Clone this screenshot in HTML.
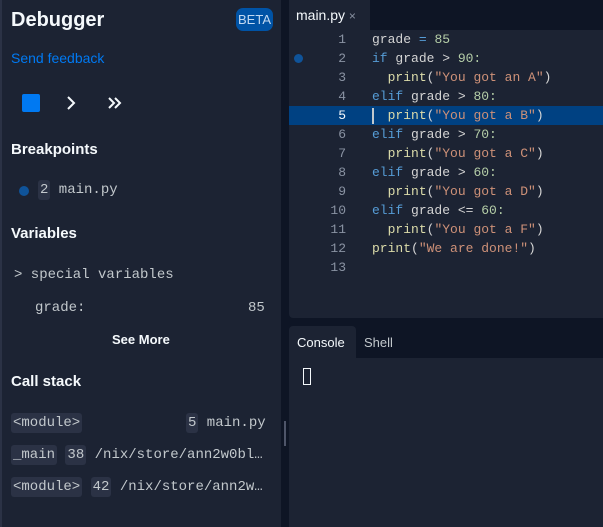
<!DOCTYPE html>
<html><head><meta charset="utf-8"><style>
*{margin:0;padding:0;box-sizing:border-box}
body{width:603px;height:527px;background:#0e1525;position:relative;overflow:hidden;font-family:"Liberation Sans",sans-serif;color:#f5f9fc}
.a{position:absolute}
.mono{font-family:"Liberation Mono",monospace;font-size:13px}
.lm{font-size:14px}
.chip{background:#2b3245;border-radius:3px;padding:2px 2px}
.code div{height:19px;line-height:19px;white-space:pre;position:relative}
.ln{position:absolute;left:0;width:57px;text-align:right;color:#8a93a3}
.k{color:#569cd6}.s{color:#ce9178}.n{color:#b5cea8}.f{color:#dcdcaa}.t{color:#d4d4d4}
</style></head><body>
<div class="a" style="left:0;top:0;width:281px;height:527px;background:#1c2333;border-left:2px solid #2b3245"></div>
<div class="a" style="left:11px;top:9px;font-size:20px;font-weight:bold">Debugger</div>
<div class="a" style="left:236px;top:8px;width:37px;height:23px;background:#0053a6;border-radius:7px;font-size:13px;color:#c2d9f2;text-align:center;line-height:23px">BETA</div>
<div class="a" style="left:11px;top:50px;font-size:14px;color:#0079f2">Send feedback</div>
<div class="a" style="left:22px;top:94px;width:18px;height:18px;background:#0079f2;border-radius:2px"></div>
<svg class="a" style="left:64px;top:95px" width="60" height="16" fill="none" stroke="#f5f9fc" stroke-width="2"><path d="M4 2l6 6-6 6"/><path d="M45 3l5 5-5 5M51 3l5 5-5 5"/></svg>
<div class="a" style="left:11px;top:141px;font-size:15px;font-weight:bold">Breakpoints</div>
<div class="a" style="left:19px;top:186px;width:10px;height:10px;border-radius:50%;background:#0f5399"></div>
<div class="a mono lm" style="left:38px;top:182px;color:#c2c8cc"><span class="chip">2</span> main.py</div>
<div class="a" style="left:11px;top:225px;font-size:15px;font-weight:bold">Variables</div>
<div class="a mono lm" style="left:14px;top:267px;color:#c2c8cc">&gt; special variables</div>
<div class="a mono lm" style="left:35px;top:300px;color:#c2c8cc">grade:</div>
<div class="a mono lm" style="left:248px;top:300px;color:#c2c8cc">85</div>
<div class="a" style="left:112px;top:332px;font-size:13px;font-weight:bold">See More</div>
<div class="a" style="left:11px;top:373px;font-size:15px;font-weight:bold">Call stack</div>
<div class="a mono lm" style="left:11px;top:415px;color:#c2c8cc"><span class="chip">&lt;module&gt;</span></div>
<div class="a mono lm" style="left:186px;top:415px;color:#c2c8cc"><span class="chip">5</span> main.py</div>
<div class="a mono lm" style="left:11px;top:447px;color:#c2c8cc"><span class="chip">_main</span> <span class="chip">38</span> /nix/store/ann2w0bl…</div>
<div class="a mono lm" style="left:11px;top:479px;color:#c2c8cc"><span class="chip">&lt;module&gt;</span> <span class="chip">42</span> /nix/store/ann2w…</div>
<div class="a" style="left:284px;top:421px;width:2px;height:25px;background:#4e5569"></div>
<div class="a" style="left:289px;top:0;width:81px;height:30px;background:#1c2333"></div>
<div class="a" style="left:296px;top:7px;font-size:14px">main.py <span style="color:#8a93a3;font-size:12px">×</span></div>
<div class="a" style="left:289px;top:30px;width:314px;height:288px;background:#1c2333;border-radius:0 0 0 4px"></div>
<div class="a" style="left:289px;top:106px;width:314px;height:19px;background:#004182"></div>
<div class="a" style="left:294px;top:54px;width:9px;height:9px;border-radius:50%;background:#0f5399"></div>
<div class="a" style="left:372px;top:108px;width:2px;height:16px;background:#c2c8cc"></div>
<div class="a mono code" style="left:289px;top:30px;width:314px">
<div><span class="ln">1</span><span style="margin-left:83px" class="t">grade <span class="k">=</span> <span class="n">85</span></span></div>
<div><span class="ln">2</span><span style="margin-left:83px" class="t"><span class="k">if</span> grade &gt; <span class="n">90:</span></span></div>
<div><span class="ln">3</span><span style="margin-left:83px" class="t">  <span class="f">print</span>(<span class="s">"You got an A"</span>)</span></div>
<div><span class="ln">4</span><span style="margin-left:83px" class="t"><span class="k">elif</span> grade &gt; <span class="n">80:</span></span></div>
<div><span class="ln" style="color:#f5f9fc">5</span><span style="margin-left:83px" class="t">  <span class="f">print</span>(<span class="s">"You got a B"</span>)</span></div>
<div><span class="ln">6</span><span style="margin-left:83px" class="t"><span class="k">elif</span> grade &gt; <span class="n">70:</span></span></div>
<div><span class="ln">7</span><span style="margin-left:83px" class="t">  <span class="f">print</span>(<span class="s">"You got a C"</span>)</span></div>
<div><span class="ln">8</span><span style="margin-left:83px" class="t"><span class="k">elif</span> grade &gt; <span class="n">60:</span></span></div>
<div><span class="ln">9</span><span style="margin-left:83px" class="t">  <span class="f">print</span>(<span class="s">"You got a D"</span>)</span></div>
<div><span class="ln">10</span><span style="margin-left:83px" class="t"><span class="k">elif</span> grade &lt;= <span class="n">60:</span></span></div>
<div><span class="ln">11</span><span style="margin-left:83px" class="t">  <span class="f">print</span>(<span class="s">"You got a F"</span>)</span></div>
<div><span class="ln">12</span><span style="margin-left:83px" class="t"><span class="f">print</span>(<span class="s">"We are done!"</span>)</span></div>
<div><span class="ln">13</span></div>
</div>
<div class="a" style="left:289px;top:326px;width:67px;height:32px;background:#1c2333;border-radius:4px 4px 0 0"></div>
<div class="a" style="left:297px;top:335px;font-size:13px">Console</div>
<div class="a" style="left:364px;top:335px;font-size:13px;color:#c2c8cc">Shell</div>
<div class="a" style="left:289px;top:358px;width:314px;height:169px;background:#1c2333"></div>
<div class="a" style="left:303px;top:368px;width:8px;height:17px;border:1px solid #f5f9fc"></div>
</body></html>
